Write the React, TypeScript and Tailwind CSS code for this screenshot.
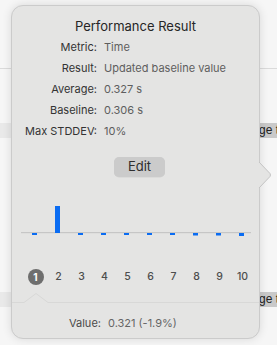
import React from "react";

const ROWS = [
  { label: "Metric:", value: "Time" },
  { label: "Result:", value: "Updated baseline value" },
  { label: "Average:", value: "0.327 s" },
  { label: "Baseline:", value: "0.306 s" },
  { label: "Max STDDEV:", value: "10%" },
];

// bar heights: negative = above the baseline
const BARS = [2, -27, 2, 2, 2, 2, 2, 2.5, 2.5, 3];

function Band() {
  return (
    <div className="flex h-[15px]">
      <div className="flex-1 bg-[#e9e9e9]" />
      <div className="w-[18px] whitespace-nowrap bg-[#c9c9c9] font-['Liberation_Sans',sans-serif] text-[12px] leading-[15px] text-[#222]">
        ge t
      </div>
    </div>
  );
}

function Chart() {
  return (
    <svg width="247" height="40" className="block">
      <rect x="9" y="32" width="230" height="1.2" fill="#c6c6c6" />
      {BARS.map((h, i) => {
        const x = 20 + i * 23;
        if (h < 0) return <rect key={i} x={x} y={33 + h} width="5" height={-h} fill="#0a6cf2" />;
        return <rect key={i} x={x} y={33} width="5" height={h} fill="#0a6cf2" />;
      })}
    </svg>
  );
}

export default function App() {
  return (
    <div
      className="relative h-[345px] w-[277px] overflow-hidden bg-[#f6f6f6]"
      style={{ fontFamily: "Inter, 'Liberation Sans', sans-serif" }}
    >
      {/* list behind the popover */}
      <div className="h-[68px]" />
      <div className="h-px bg-[#dadada]" />
      <div className="h-[54px]" />
      <Band />
      <div className="h-[154px]" />
      <Band />

      {/* popover */}
      <div className="absolute left-[11px] top-[5px] h-[334px] w-[249px] rounded-[12px] border border-[#cbcbcb] bg-[#e4e4e3] shadow-[0_0_10px_rgba(0,0,0,0.12)]">
        <svg width="14" height="28" className="absolute left-[246px] top-[155px]">
          <path d="M0 0 L1 1 L12 12.5 Q13 14 12 15.5 L1 27 L0 28 Z" fill="#e4e4e3" />
          <path d="M1 1 L12 12.5 Q13 14 12 15.5 L1 27" fill="none" stroke="#c4c4c4" />
        </svg>

        <div className="flex flex-col">
          <div className="pt-[11px] text-center text-[13px] leading-[18px] text-[#262626]">
            Performance Result
          </div>

          <div className="mt-[2px] grid grid-cols-[85px_1fr] gap-x-[7px] text-[11px] leading-[21px]">
            {ROWS.map((r) => (
              <React.Fragment key={r.label}>
                <span className="text-right text-[#333]">{r.label}</span>
                <span className="text-[#5e5e5e]">{r.value}</span>
              </React.Fragment>
            ))}
          </div>

          <div className="ml-[102px] mt-[15px] flex h-[20px] w-[51px] items-center justify-center rounded-[5px] bg-[#cbcbcb] text-[13px] text-[#2e2e2e] shadow-[0_0.5px_0_rgba(0,0,0,0.08)]">
            Edit
          </div>

          <div className="mt-[23px]">
            <Chart />
          </div>

          <div className="mt-[29px] flex h-[16px] pl-[12px] text-[10.5px] font-medium text-[#4d4d4d]">
            {Array.from({ length: 10 }, (_, i) => (
              <div key={i} className="flex w-[23px] items-center justify-center">
                {i === 0 ? (
                  <span className="flex h-[16px] w-[16px] items-center justify-center rounded-full bg-[#6e6e6e] text-[10px] font-bold text-white">
                    1
                  </span>
                ) : (
                  i + 1
                )}
              </div>
            ))}
          </div>

          <svg width="247" height="12" className="mt-[7px] block">
            <path d="M0 10.5 H12 L24 1.5 L36 10.5 H247" fill="none" stroke="#d8d8d7" />
          </svg>

          <div className="mt-[11px] flex h-[16px] items-center gap-[7px] pl-[57px] text-[11px]">
            <span className="text-[#4a4a4a]">Value:</span>
            <span className="text-[#666]">0.321 (-1.9%)</span>
          </div>
        </div>
      </div>
    </div>
  );
}
